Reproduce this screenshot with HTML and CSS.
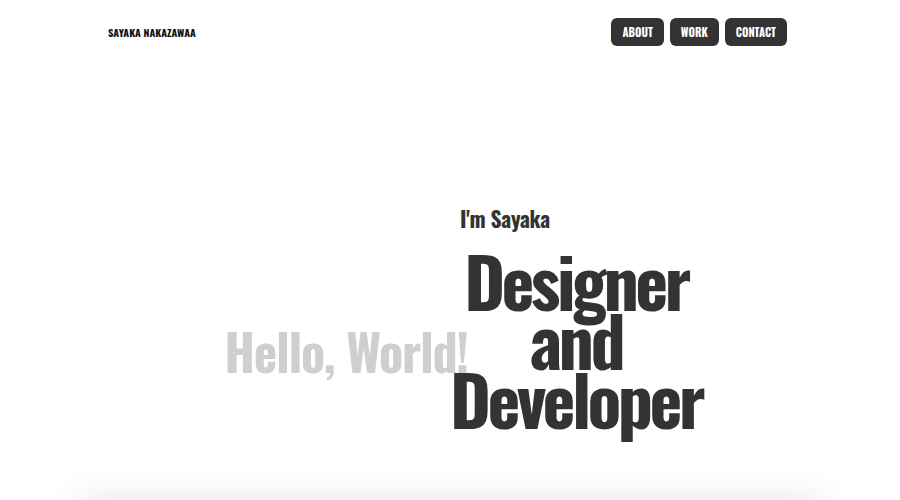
FILE: index.html
```html
<!DOCTYPE html>
<html lang="en">
<head>
<meta charset="utf-8">
<title>Sayaka Nakazawaa</title>
<link rel="stylesheet" href="styles.css">
</head>
<body>
<header class="site-header">
  <div class="brand">SAYAKA NAKAZAWAA</div>
  <nav class="nav">
    <a class="nav-btn" href="#about">ABOUT</a>
    <a class="nav-btn" href="#work">WORK</a>
    <a class="nav-btn" href="#contact">CONTACT</a>
  </nav>
</header>
<main>
  <section class="hero">
    <div class="hero-block">
      <p class="intro">I'm Sayaka</p>
      <h1 class="title">
        <span class="hello">Hello, World!</span>
        Designer<br>and<br>Developer
      </h1>
    </div>
  </section>
  <section class="card"></section>
</main>
</body>
</html>
```
FILE: styles.css
```css
* { box-sizing: border-box; }
html, body { margin: 0; padding: 0; background: #fff; }
body {
  font-family: "Oswald", "Liberation Sans Narrow", "DejaVu Sans Condensed", sans-serif;
  color: #333;
  overflow: hidden;
}
.site-header {
  display: flex;
  align-items: center;
  justify-content: space-between;
  height: 64px;
  padding: 0 113px 0 108px;
}
.brand {
  font-size: 10.5px;
  font-weight: 700;
  color: #111;
}
.nav { display: flex; gap: 6px; }
.nav-btn {
  display: flex;
  align-items: center;
  height: 28px;
  padding: 0 11px;
  background: #333;
  color: #fff;
  border-radius: 6px;
  font-size: 11px;
  font-weight: 700;
  text-decoration: none;
}
.hero {
  height: 441px;
  padding-left: 450px;
  padding-top: 138px;
}
.hero-block { display: inline-block; }
.intro {
  margin: 0 0 16px 10px;
  font-size: 21.5px;
  font-weight: 700;
  letter-spacing: -0.3px;
}
.title {
  position: relative;
  margin: 0;
  font-size: 70px;
  line-height: 59px;
  font-weight: 700;
  text-align: center;
  letter-spacing: -3.6px;
}
.hello {
  position: absolute;
  right: 100%;
  top: 70px;
  margin-right: -18px;
  white-space: nowrap;
  font-size: 50px;
  line-height: 60px;
  letter-spacing: -1.2px;
  color: #cfcfcf;
}
.card {
  margin: 0 80px;
  height: 300px;
  background: #fff;
  box-shadow: 0 0 40px rgba(0,0,0,0.14);
}
```
